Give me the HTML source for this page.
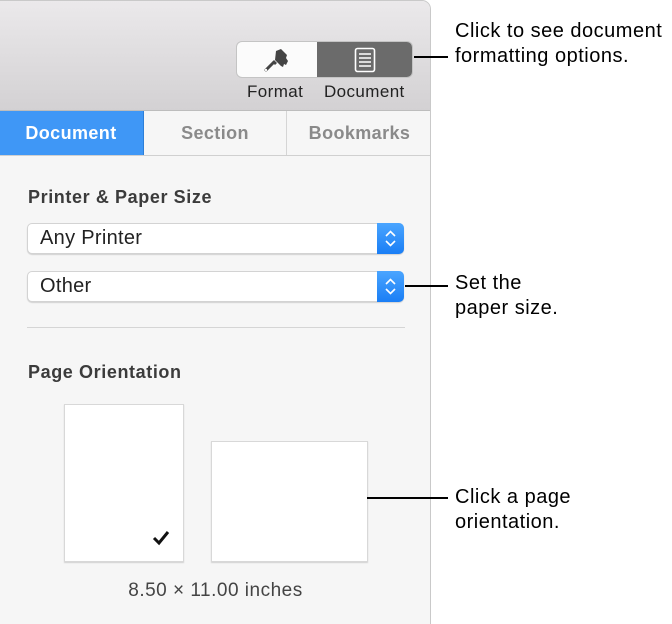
<!DOCTYPE html>
<html><head><meta charset="utf-8"><style>
*{margin:0;padding:0;box-sizing:border-box}
html,body{width:672px;height:624px;overflow:hidden}
body{background:#fff;font-family:"Liberation Sans",sans-serif;position:relative}
.panel{position:absolute;left:-2px;top:0;width:433px;height:640px;background:#f6f6f6;border:1px solid #c9c9c9;border-top-right-radius:9px;overflow:hidden}
.hdr{position:absolute;left:0;top:0;width:100%;height:110px;background:linear-gradient(#ebe9eb,#d3d1d3);border-bottom:1px solid #bdbdbd}
.seg{position:absolute;left:237px;top:40px;width:177px;height:37px;border-radius:6px;border:1px solid #c4c4c4;overflow:hidden;background:#fbfbfb}
.seg .r{position:absolute;left:80px;top:-1px;width:97px;height:37px;background:#6b6b6b}
.lbl{position:absolute;top:81px;font-size:17px;letter-spacing:.4px;color:#222}
.tabs{position:absolute;left:0;top:110px;width:100%;height:45px;background:#f6f6f6;border-bottom:1px solid #d0d0d0}
.tab{position:absolute;top:0;height:44px;line-height:44px;text-align:center;font-weight:bold;font-size:18px;letter-spacing:.4px;color:#8a8a8a;border-right:1px solid #d5d5d5}
.h{position:absolute;font-weight:bold;font-size:18px;letter-spacing:.6px;color:#3b3b3b}
.pop{position:absolute;left:28px;width:377px;height:31px;background:#fff;border:1px solid #d3d3d3;border-radius:5px;box-shadow:0 1px 1px rgba(0,0,0,.15);font-size:20px;letter-spacing:.3px;color:#222;line-height:29px;padding-left:12px}
.pop .st{position:absolute;right:-1px;top:-1px;width:27px;height:31px;background:linear-gradient(#4aa5ff,#1a7ef5);border-radius:0 5px 5px 0}
.pg{position:absolute;background:#fff;border:1px solid #d8d8d8;box-shadow:0 1px 1px rgba(0,0,0,.15)}
.line{position:absolute;height:2px;background:#000}
.co{position:absolute;left:455px;font-size:20px;letter-spacing:.5px;line-height:25px;color:#000;white-space:nowrap}
</style></head><body>
<div class="panel">
 <div class="hdr">
  <div class="seg"><div class="r"></div>
   <svg style="position:absolute;left:25px;top:6px" width="28" height="26" viewBox="0 0 28 26"><path d="M14 3l5-2 6 6-1 3 2 3-2 4-2-1-1 3-2-1-3-3-3-3z" fill="#444"/><path d="M12 12l3 3-2 2-3-3z" fill="#444"/><path d="M11 15l-7 7" stroke="#444" stroke-width="3" stroke-linecap="round"/><circle cx="4" cy="22" r="1.2" fill="#fbfbfb"/></svg>
   <svg style="position:absolute;left:116px;top:5px" width="24" height="26" viewBox="0 0 24 26"><rect x="2.5" y="1.5" width="19" height="23" rx="2" fill="none" stroke="#fff" stroke-width="1.6"/><path d="M6 7h12M6 11h12M6 15h12M6 19h12" stroke="#fff" stroke-width="1.6"/></svg>
  </div>
  <div class="lbl" style="left:248px">Format</div>
  <div class="lbl" style="left:325px">Document</div>
 </div>
 <div class="tabs">
  <div class="tab" style="left:0;width:145px;background:#3f97f6;color:#fff;border-right:1px solid #2d7fd8">Document</div>
  <div class="tab" style="left:145px;width:143px">Section</div>
  <div class="tab" style="left:288px;width:145px;border:0">Bookmarks</div>
 </div>
 <div class="h" style="left:29px;top:186px">Printer &amp; Paper Size</div>
 <div class="pop" style="top:222px">Any Printer<div class="st"><svg width="27" height="31" viewBox="0 0 27 31"><path d="M9 13l4.5-4.5L18 13M9 18l4.5 4.5L18 18" stroke="#fff" stroke-width="1.6" fill="none"/></svg></div></div>
 <div class="pop" style="top:270px">Other<div class="st"><svg width="27" height="31" viewBox="0 0 27 31"><path d="M9 13l4.5-4.5L18 13M9 18l4.5 4.5L18 18" stroke="#fff" stroke-width="1.6" fill="none"/></svg></div></div>
 <div style="position:absolute;left:28px;top:326px;width:378px;height:1px;background:#d5d5d5"></div>
 <div class="h" style="left:29px;top:361px">Page Orientation</div>
 <div class="pg" style="left:65px;top:403px;width:120px;height:158px"><svg style="position:absolute;left:86px;top:124px" width="20" height="18" viewBox="0 0 20 18"><path d="M3 9l5 5 9-11" stroke="#111" stroke-width="3" fill="none"/></svg></div>
 <div class="pg" style="left:212px;top:440px;width:157px;height:121px"></div>
 <div style="position:absolute;left:0;width:433px;text-align:center;top:579px;font-size:19px;letter-spacing:.5px;color:#444">8.50 × 11.00 inches</div>
</div>
<div class="line" style="left:414px;top:56px;width:34px"></div>
<div class="line" style="left:405px;top:285px;width:43px"></div>
<div class="line" style="left:367px;top:497px;width:81px"></div>
<div class="co" style="top:19px">Click to see document<br>formatting options.</div>
<div class="co" style="top:271px">Set the<br>paper size.</div>
<div class="co" style="top:485px">Click a page<br>orientation.</div>
</body></html>
